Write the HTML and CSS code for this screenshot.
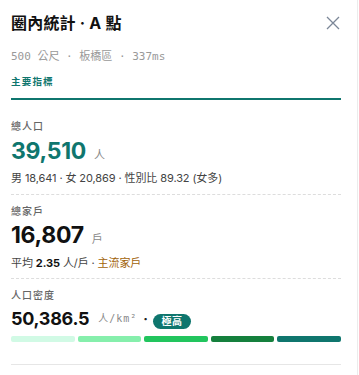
FILE: index.html
```html
<!DOCTYPE html>
<html lang="zh-Hant">
<head>
    <meta charset="UTF-8">
    <meta name="viewport" content="width=device-width, initial-scale=1.0">
    <title>圈內統計</title>
    <link rel="stylesheet" href="styles.css">
</head>
<body>

    <div class="panel">
        <div class="head">
            <h2>圈內統計 · A 點</h2>
            <button class="close" aria-label="關閉">
                <svg width="14" height="14" viewBox="0 0 14 14"><path d="M1 1 L13 13 M13 1 L1 13" stroke="#7c8798" stroke-width="1.3" fill="none"/></svg>
            </button>
        </div>
        <div class="meta">500 公尺 · 板橋區 · 337ms</div>

        <div class="tab">主要指標</div>

        <div class="stat first">
            <div class="label">總人口</div>
            <div class="value teal"><span class="num">39,510</span><span class="unit">人</span></div>
            <div class="note">男 18,641 · 女 20,869 · 性別比 89.32 (女多)</div>
        </div>

        <div class="stat">
            <div class="label">總家戶</div>
            <div class="value"><span class="num">16,807</span><span class="unit">戶</span></div>
            <div class="note">平均 <b>2.35</b> 人/戶 · <span class="brown">主流家戶</span></div>
        </div>

        <div class="stat last">
            <div class="label">人口密度</div>
            <div class="value small">
                <span class="num">50,386.5</span>
                <span class="unit mono">人/km²</span>
                <span class="dot">·</span>
                <span class="badge">極高</span>
            </div>
            <div class="scale">
                <span class="s1"></span>
                <span class="s2"></span>
                <span class="s3"></span>
                <span class="s4"></span>
                <span class="s5"></span>
            </div>
        </div>
    </div>

</body>
</html>
```

FILE: styles.css
```css
* {
    box-sizing: border-box;
}

body {
    margin: 0;
    background: #fff;
    color: #222;
    font-family: Inter, "Noto Sans CJK TC", sans-serif;
}

/* 面板 */
.panel {
    width: 358px;
    height: 375px;
    padding: 0 16px 0 11px;
    border-right: 1px solid #ececec;
    overflow: hidden;
}

.head {
    display: flex;
    justify-content: space-between;
    align-items: center;
    padding-top: 12px;
    height: 34px;
}

h2 {
    margin: 0;
    font-size: 16px;
    font-weight: 700;
    color: #111;
    letter-spacing: 0.2px;
    line-height: 22px;
}

.close {
    border: none;
    background: none;
    padding: 0;
    width: 14px;
    height: 14px;
    margin-right: 1px;
    display: flex;
}

.meta {
    margin-top: 15px;
    height: 16px;
    font-family: "DejaVu Sans Mono", "Noto Sans CJK TC", monospace;
    font-size: 11px;
    color: #999;
    line-height: 16px;
}

.tab {
    margin-top: 10px;
    height: 25px;
    font-size: 9.5px;
    font-weight: 700;
    color: #0f766e;
    letter-spacing: 1.2px;
    line-height: 14px;
    border-bottom: 2px solid #0f766e;
}

/* 指標區塊 */
.stat {
    padding: 9px 0 7.5px;
    border-bottom: 1px dashed #ddd;
}

.stat.first {
    padding-top: 19px;
}

.stat.last {
    padding-bottom: 22px;
    border-bottom: 1px solid #e6e6e6;
}

.label {
    height: 14px;
    font-size: 10px;
    font-weight: 500;
    color: #666;
    letter-spacing: 1px;
    line-height: 14px;
}

.value {
    display: flex;
    align-items: baseline;
    height: 30px;
    margin-top: 2.5px;
    font-size: 23px;
    font-weight: 700;
    color: #111;
    line-height: 30px;
}

.num {
    letter-spacing: -0.3px;
}

.value.teal {
    color: #0f766e;
}

.value.small {
    height: 24px;
    margin-top: 4.5px;
    font-size: 18px;
    line-height: 24px;
    align-items: center;
}

.unit {
    margin-left: 8px;
    font-size: 11px;
    font-weight: 400;
    color: #888;
}

.unit.mono {
    font-family: "DejaVu Sans Mono", "Noto Sans CJK TC", monospace;
    font-size: 10px;
    letter-spacing: 1px;
    margin-left: 9px;
}

.dot {
    margin-left: 6px;
    font-size: 14px;
    color: #222;
}

.badge {
    margin-left: 5px;
    margin-top: 6px;
    width: 38px;
    height: 15px;
    background: #0f766e;
    color: #fff;
    font-size: 10px;
    font-weight: 700;
    line-height: 15px;
    text-align: center;
    border-radius: 8px;
    letter-spacing: 0.5px;
}

.note {
    height: 16px;
    margin-top: 4.5px;
    font-size: 11px;
    color: #444;
    line-height: 16px;
    letter-spacing: -0.1px;
}

.note b {
    color: #111;
}

.brown {
    color: #a16207;
}

/* 密度色階 */
.scale {
    display: flex;
    gap: 3px;
    margin-top: 5px;
}

.scale span {
    flex: 1;
    height: 6px;
    border-radius: 2px;
}

.s1 { background: #d1fae5; }
.s2 { background: #86efac; }
.s3 { background: #22c55e; }
.s4 { background: #15803d; }
.s5 { background: #0f766e; }
```
